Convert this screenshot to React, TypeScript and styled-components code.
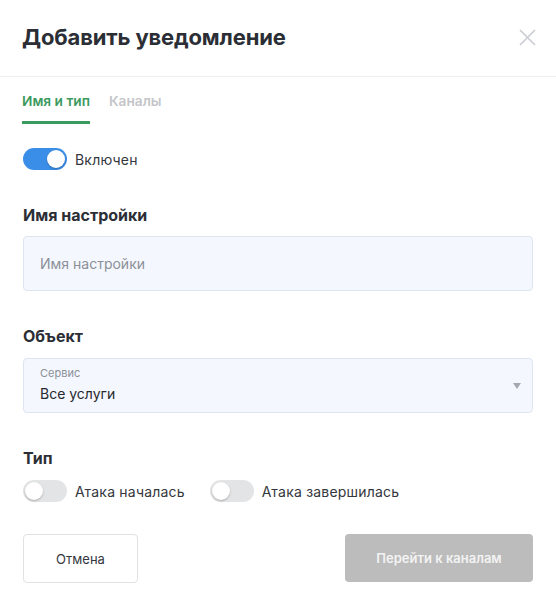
import React from "react";
import styled, { createGlobalStyle } from "styled-components";

const Global = createGlobalStyle`
  html, body { margin: 0; padding: 0; background: #ffffff; }
  body { font-family: Inter, "Noto Sans", "Liberation Sans", sans-serif; color: #2b2e35; }
  * { box-sizing: border-box; }
`;

const Modal = styled.div`
  width: 556px;
  height: 606px;
  background: #fff;
  display: flex;
  flex-direction: column;
`;

const Header = styled.div`
  height: 77px;
  display: flex;
  align-items: center;
  justify-content: space-between;
  padding: 0 20px 2px 22px;
  border-bottom: 1px solid #eeeff1;
`;

const Title = styled.h1`
  margin: 0;
  font-size: 22px;
  font-weight: 700;
  color: #2b2e35;
  letter-spacing: -0.15px;
`;

const CloseButton = styled.button`
  border: none;
  background: none;
  padding: 0;
  width: 17px;
  height: 17px;
  display: flex;
  align-items: center;
  justify-content: center;
  cursor: pointer;
`;

const Body = styled.div`
  padding: 0 23px 0 23px;
  display: flex;
  flex-direction: column;
`;

const Tabs = styled.div`
  display: flex;
  gap: 19px;
  margin-left: -1px;
`;

const Tab = styled.div<{ $active?: boolean }>`
  padding: 14px 0 10px;
  line-height: 20px;
  font-size: 13.7px;
  font-weight: 600;
  color: ${(p) => (p.$active ? "#3b9a5d" : "#c4c6ca")};
  border-bottom: 3px solid ${(p) => (p.$active ? "#3b9a5d" : "transparent")};
`;

const ToggleRow = styled.div<{ $top: number }>`
  margin-top: ${(p) => p.$top}px;
  display: flex;
  align-items: center;
  height: 22px;
`;

const ToggleItem = styled.label`
  display: flex;
  align-items: center;
  margin-right: 25px;
  font-size: 14px;
  letter-spacing: 0.2px;
  color: #34373d;
`;

const Track = styled.span<{ $on?: boolean }>`
  position: relative;
  width: 44px;
  height: 22px;
  border-radius: 11px;
  background: ${(p) => (p.$on ? "#3b8ee8" : "#e3e4e6")};
  margin-right: 8px;
  flex-shrink: 0;
`;

const Knob = styled.span<{ $on?: boolean }>`
  position: absolute;
  top: 2px;
  left: ${(p) => (p.$on ? "24px" : "2px")};
  width: 18px;
  height: 18px;
  border-radius: 50%;
  background: #fff;
  box-shadow: 0 1px 2px rgba(0, 0, 0, 0.25);
`;

const SectionTitle = styled.h2`
  margin: 35px 0 0;
  font-size: 16px;
  line-height: 20px;
  font-weight: 700;
  color: #2b2e35;
`;

const Field = styled.div<{ $top: number }>`
  margin-top: ${(p) => p.$top}px;
  height: 55px;
  border: 1px solid #dde5f0;
  border-radius: 4px;
  background: #f4f7fe;
  position: relative;
  display: flex;
  flex-direction: column;
  justify-content: center;
  padding: 0 16px;
`;

const Placeholder = styled.span`
  font-size: 14px;
  color: #8c9098;
`;

const SmallLabel = styled.span`
  font-size: 11px;
  color: #8c9098;
  line-height: 14px;
  margin-top: -2px;
`;

const Value = styled.span`
  font-size: 14px;
  color: #26282c;
  line-height: 18px;
  margin-top: 5px;
`;

const Arrow = styled.span`
  position: absolute;
  right: 11px;
  top: 24px;
  width: 0;
  height: 0;
  border-left: 4px solid transparent;
  border-right: 4px solid transparent;
  border-top: 6px solid #a5a8ae;
`;

const Footer = styled.div`
  margin-top: 32px;
  display: flex;
  justify-content: space-between;
  align-items: flex-start;
`;

const CancelButton = styled.button`
  width: 115px;
  height: 49px;
  border: 1px solid #e1e2e4;
  border-radius: 4px;
  background: #fff;
  font-family: inherit;
  font-size: 13px;
  color: #34373d;
`;

const PrimaryButton = styled.button`
  width: 188px;
  height: 48px;
  border: none;
  border-radius: 4px;
  background: #bcbcbc;
  font-family: inherit;
  font-size: 13px;
  font-weight: 600;
  color: #f3f3f3;
`;

const Toggle = ({ on, label }: { on?: boolean; label: string }) => (
  <ToggleItem>
    <Track $on={on}>
      <Knob $on={on} />
    </Track>
    {label}
  </ToggleItem>
);

export default function App() {
  return (
    <>
      <Global />
      <Modal>
        <Header>
          <Title>Добавить уведомление</Title>
          <CloseButton aria-label="close">
            <svg width="17" height="17" viewBox="0 0 17 17">
              <path d="M1 1L16 16M16 1L1 16" stroke="#c9ccd3" strokeWidth="1.6" />
            </svg>
          </CloseButton>
        </Header>
        <Body>
          <Tabs>
            <Tab $active>Имя и тип</Tab>
            <Tab>Каналы</Tab>
          </Tabs>
          <ToggleRow $top={24}>
            <Toggle on label="Включен" />
          </ToggleRow>
          <SectionTitle>Имя настройки</SectionTitle>
          <Field $top={11}>
            <Placeholder>Имя настройки</Placeholder>
          </Field>
          <SectionTitle>Объект</SectionTitle>
          <Field $top={12}>
            <SmallLabel>Сервис</SmallLabel>
            <Value>Все услуги</Value>
            <Arrow />
          </Field>
          <SectionTitle>Тип</SectionTitle>
          <ToggleRow $top={12}>
            <Toggle label="Атака началась" />
            <Toggle label="Атака завершилась" />
          </ToggleRow>
          <Footer>
            <CancelButton>Отмена</CancelButton>
            <PrimaryButton>Перейти к каналам</PrimaryButton>
          </Footer>
        </Body>
      </Modal>
    </>
  );
}
